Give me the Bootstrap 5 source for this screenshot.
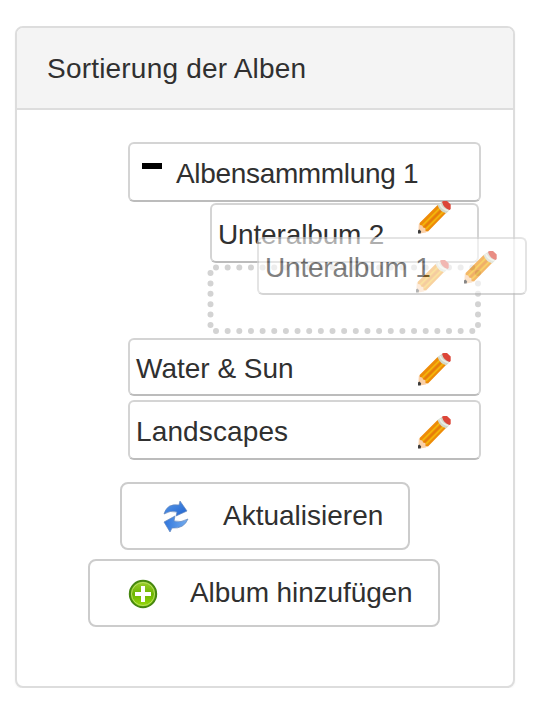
<!DOCTYPE html>
<html lang="de">
<head>
<meta charset="utf-8">
<meta name="viewport" content="width=device-width, initial-scale=1">
<title>Sortierung der Alben</title>
<link href="https://cdn.jsdelivr.net/npm/bootstrap@5.3.0/dist/css/bootstrap.min.css" rel="stylesheet">
<style>
body{font-family:"Liberation Sans",Arial,sans-serif;font-size:28px;line-height:32px;color:#303030;background:#fff;overflow:hidden}
.album-panel{width:500px;height:662px;margin:26px 0 0 15px;border:2px solid #ddd;border-radius:8px;box-shadow:0 1px 2px rgba(0,0,0,.05)}
.album-panel .card-header{height:82px;padding:1px 0 0 30px;letter-spacing:.2px;background:#f4f4f4;border-bottom:2px solid #ddd;border-radius:6px 6px 0 0}
.album-panel .card-body{padding:32px 32px 0 111px}
.album{height:58px;padding:4px 0 0 6px;border:2px solid #d4d4d4;border-bottom-color:#bcbcbc;border-radius:6px;background:#fff;white-space:nowrap}
.album .pencil{margin-right:28px}
.first-album{height:60px;margin-bottom:1px;padding-left:12px;letter-spacing:-.33px}
.minus{width:20px;height:6px;background:#000;margin:-16px 14px 0 0}
.sub-albums{margin:0 2px 4px 82px}
.sub-album{height:60px;letter-spacing:-.15px}
.sub-album .pencil{margin-right:26px;margin-top:-35px}
.pencil{width:33px;height:33px;flex:none}
.drop-slot{height:70px;margin:1px -2px 0 -3px}
.drop-slot>.dots{display:block;width:274px;height:70px}
.drop-pencil{left:209px;top:-4px}
.dragged{left:257px;top:237px;width:270px;height:58px;opacity:.61;letter-spacing:-.2px}
.dragged .pencil{margin-right:28px;margin-top:-2px}
.landscape-album{height:60px;letter-spacing:.12px}
.actions{margin:22px 0 0 -40px}
.action-btn{height:68px;padding:0;border:2px solid #ccc;border-radius:8px;background:#fff;color:#303030;font-size:28px;line-height:32px}
.action-btn:hover{background:#f4f4f4;border-color:#bbb}
.update-btn{width:290px;margin-left:32px;padding-left:39px}
.add-btn{width:352px;margin-top:9px;padding-left:38px;letter-spacing:-.1px}
.update-btn svg{width:30px;height:34px;margin-right:32px}
.add-btn svg{width:32px;height:32px;margin:2px 31px 0 -1px}
</style>
<script src="https://cdn.jsdelivr.net/npm/bootstrap@5.3.0/dist/js/bootstrap.bundle.min.js"></script>
</head>
<body>
<svg width="0" height="0" class="position-absolute" aria-hidden="true">
  <defs>
    <symbol id="pencil" viewBox="0 0 33 33">
      <path d="M.3 31.500L.8 23L3 21.500L10 29L8 31.500L2 32.500Z" fill="#fad0a8"/>
      <path d="M0 32.500V29.500L1.500 28.500L3.200 30.500L2.500 32.500Z" fill="#3c3c3c"/>
      <path d="M1.600 22L19.600 4L28 12L10 30.500L7.500 30V27L5 26.500L4.500 24.500L2 24Z" fill="#ee8c08"/>
      <path d="M4.500 24.500L22.500 6.500M8 28L26 10" stroke="#f3b90c" stroke-width="1.600"/>
      <path d="M6.300 26.300L24.300 8.300" stroke="#e47c0c" stroke-width="1.600"/>
      <path d="M19.500 4L24.500 .5L32.300 8L28.500 12.200Q22 11 19.500 4Z" fill="#d3d8c9"/>
      <path d="M22 3Q24 8.500 30.500 9.500" fill="none" stroke="#eceee5" stroke-width="1.600"/>
      <path d="M24 .7L25.500 0H29L32.700 3.500V8L31.500 9Q25.500 7 24 .7Z" fill="#dc4638"/>
    </symbol>
  </defs>
</svg>

<main class="card album-panel">
  <div class="card-header d-flex align-items-center">Sortierung der Alben</div>
  <div class="card-body">
    <div class="album first-album d-flex align-items-center"><span class="minus"></span>Albensammmlung 1</div>
    <div class="sub-albums">
      <div class="album sub-album d-flex align-items-center justify-content-between">Unteralbum 2<svg class="pencil"><use href="#pencil"/></svg></div>
      <div class="drop-slot position-relative">
        <svg class="dots" viewBox="0 0 274 70" fill="none" stroke="#d3d3d3" stroke-width="6" stroke-linecap="round">
          <path d="M9 3.500H265.500M9 67H265.500" stroke-dasharray="0 11.650"/>
          <path d="M3.500 9V61.500M271 9V61.500" stroke-dasharray="0 10.400"/>
        </svg>
        <svg class="pencil drop-pencil position-absolute"><use href="#pencil"/></svg>
      </div>
    </div>
    <div class="album d-flex align-items-center justify-content-between">Water &amp; Sun<svg class="pencil"><use href="#pencil"/></svg></div>
    <div class="album landscape-album mt-1 d-flex align-items-center justify-content-between">Landscapes<svg class="pencil"><use href="#pencil"/></svg></div>
    <div class="actions">
      <button type="button" class="btn action-btn update-btn d-flex align-items-center">
        <svg viewBox="0 0 30 34" aria-hidden="true">
          <defs><linearGradient id="blue" x2="1" y2="1"><stop stop-color="#5a9bea"/><stop offset="1" stop-color="#1f62ce"/></linearGradient>
          <linearGradient id="blue2" x2="1"><stop stop-color="#2f75dc"/><stop offset="1" stop-color="#75adee"/></linearGradient></defs>
          <path d="M3 15Q6 4 18 6L19 2L26 12L15 17L16 13Q9 11 3 15Z" fill="url(#blue)" stroke="#6487bb" stroke-width=".7"/>
          <path d="M27 20Q23 30 11 29L9 33L3 23L14 17L13 22Q20 24 27 20Z" fill="url(#blue2)" stroke="#6487bb" stroke-width=".7"/>
        </svg>Aktualisieren
      </button>
      <button type="button" class="btn action-btn add-btn d-flex align-items-center">
        <svg viewBox="0 0 32 32" aria-hidden="true">
          <defs><linearGradient id="green" x2="0" y2="1"><stop stop-color="#a0d030"/><stop offset=".5" stop-color="#6cb500"/><stop offset="1" stop-color="#9bdc0c"/></linearGradient></defs>
          <circle cx="16" cy="16" r="13.200" fill="url(#green)" stroke="#468710" stroke-width="2"/>
          <circle cx="16" cy="16" r="11.500" fill="none" stroke="#b7df62" stroke-width="1"/>
          <path d="M14 8H18V14H24V18H18V24H14V18H8V14H14Z" fill="#fff"/>
        </svg>Album hinzufügen
      </button>
    </div>
  </div>
</main>
<div class="album dragged position-absolute d-flex align-items-center justify-content-between">Unteralbum 1<svg class="pencil"><use href="#pencil"/></svg></div>
</body>
</html>
